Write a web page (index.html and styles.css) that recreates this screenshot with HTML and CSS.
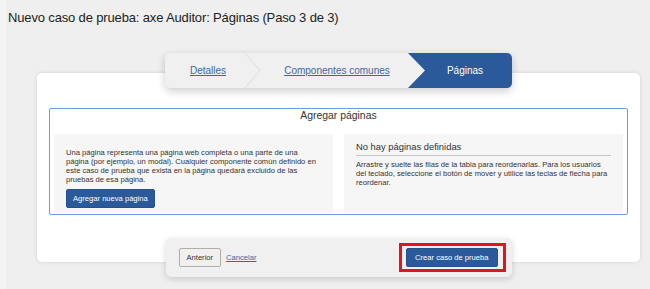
FILE: index.html
```html
<!DOCTYPE html>
<html lang="es">
<head>
<meta charset="utf-8">
<title>Nuevo caso de prueba</title>
<link rel="stylesheet" href="styles.css">
</head>
<body>
<div class="shell">
  <h1 class="title">Nuevo caso de prueba: axe Auditor: Páginas (Paso 3 de 3)</h1>
  <div class="stage">
    <nav class="wizard">
      <a class="step step-one" href="#">Detalles</a>
      <svg class="sep" width="17" height="35" viewBox="0 0 17 35"><polyline points="0,0 15,17.5 0,35" fill="none" stroke="#dcdcdc" stroke-width="1"/></svg>
      <a class="step step-two" href="#">Componentes comunes</a>
      <span class="step step-active">Páginas</span>
    </nav>
    <section class="card">
      <div class="group">
        <div class="group-title">Agregar páginas</div>
        <div class="panels">
          <div class="panel panel-left">
            <p class="help">Una página representa una página web completa o una parte de una página (por ejemplo, un modal). Cualquier componente común definido en este caso de prueba que exista en la página quedará excluido de las pruebas de esa página.</p>
            <button class="btn btn-primary btn-add" type="button">Agregar nueva página</button>
          </div>
          <div class="panel panel-right">
            <h2 class="empty-title">No hay páginas definidas</h2>
            <p class="help">Arrastre y suelte las filas de la tabla para reordenarlas. Para los usuarios del teclado, seleccione el botón de mover y utilice las teclas de flecha para reordenar.</p>
          </div>
        </div>
      </div>
    </section>
    <footer class="actions">
      <button class="btn btn-default" type="button">Anterior</button>
      <a class="link" href="#">Cancelar</a>
      <span class="spacer"></span>
      <span class="highlight"><button class="btn btn-primary" type="button">Crear caso de prueba</button></span>
    </footer>
  </div>
</div>
</body>
</html>
```

FILE: styles.css
```css
html, body {
  margin: 0;
  padding: 0;
}
body {
  background: #f4f4f4;
  font-family: "Liberation Sans", Arial, sans-serif;
  color: #333;
  height: 289px;
  overflow: hidden;
}
.shell {
  margin-left: 6px;
  background: #efefef;
  height: 289px;
  padding-top: 10px;
  box-sizing: border-box;
}
.title {
  margin: 0 0 0 2px;
  font-size: 13px;
  letter-spacing: -0.15px;
  font-weight: normal;
  line-height: 16px;
  color: #222;
}
.stage {
  margin: 27px 10px 0 31px;
  display: flex;
  flex-direction: column;
}
.wizard {
  position: relative;
  z-index: 2;
  align-self: center;
  display: flex;
  width: 347px;
  height: 35px;
  margin-bottom: -15px;
  background: #f0f0f0;
  border-radius: 5px;
  overflow: hidden;
  box-shadow: 0 3px 8px rgba(0,0,0,0.2);
  font-size: 10px;
}
.step {
  display: flex;
  align-items: center;
  justify-content: center;
  box-sizing: border-box;
  height: 35px;
}
.step-one { width: 80px; padding-left: 6px; }
.sep { flex: none; display: block; }
.step-two { width: 146px; padding-left: 4px; }
.wizard a {
  color: #3d67a3;
  text-decoration: underline;
}
.step-active {
  width: 104px;
  padding-left: 17px;
  padding-right: 7px;
  background: #2a5a99;
  color: #fff;
  clip-path: polygon(0 0, 100% 0, 100% 100%, 0 100%, 17px 50%);
}
.card {
  background: #fff;
  border-radius: 5px;
  box-shadow: 0 0 4px rgba(0,0,0,0.12);
  padding: 35px 12px 47px;
}
.group {
  border: 1px solid #6f9be0;
  border-radius: 2px;
  padding: 0 4px 1px;
}
.group-title {
  text-align: center;
  font-size: 10.4px;
  line-height: 12px;
  padding: 1px 0 12px;
  color: #333;
}
.panels {
  display: flex;
  gap: 11px;
}
.panel {
  flex: 1;
  background: #f6f6f6;
  height: 79px;
  box-sizing: border-box;
}
.panel-left {
  padding: 14px 12px 0 12px;
}
.panel-right {
  padding: 7px 12px 0 12px;
}
.help {
  margin: 0;
  font-size: 7.6px;
  line-height: 9px;
  color: #333;
}
.btn {
  font-family: "Liberation Sans", Arial, sans-serif;
  font-size: 7.6px;
  border-radius: 2px;
  cursor: pointer;
  height: 19px;
  line-height: 17px;
  padding: 0 8px;
}
.btn-primary {
  background: #2a5a99;
  color: #fff;
  border: 1px solid #24528f;
}
.btn-add {
  margin-top: 5px;
  padding: 0 6px;
}
.empty-title {
  margin: 0;
  font-size: 9.4px;
  font-weight: normal;
  line-height: 12px;
  color: #333;
  padding-bottom: 2px;
  border-bottom: 1px solid #c8c8c8;
  margin-bottom: 4px;
}
.actions {
  position: relative;
  z-index: 2;
  align-self: center;
  width: 346px;
  margin-top: -24px;
  box-sizing: border-box;
  display: flex;
  align-items: center;
  padding: 5px 6px 5px 13px;
  background: #f0f0f0;
  border-radius: 5px;
  box-shadow: 0 2px 6px rgba(0,0,0,0.16);
}
.btn-default {
  background: #f0f0f0;
  color: #333;
  border: 1px solid #b3aea6;
  padding: 0 7px;
}
.link {
  margin-left: 5px;
  font-size: 7.6px;
  color: #3d67a3;
  text-decoration: underline;
}
.spacer { flex: 1; }
.highlight {
  display: flex;
  border: 3px solid #e0161c;
  padding: 2px 5px 2px 4px;
}
.highlight .btn-primary {
  padding: 0 8px;
}
```
